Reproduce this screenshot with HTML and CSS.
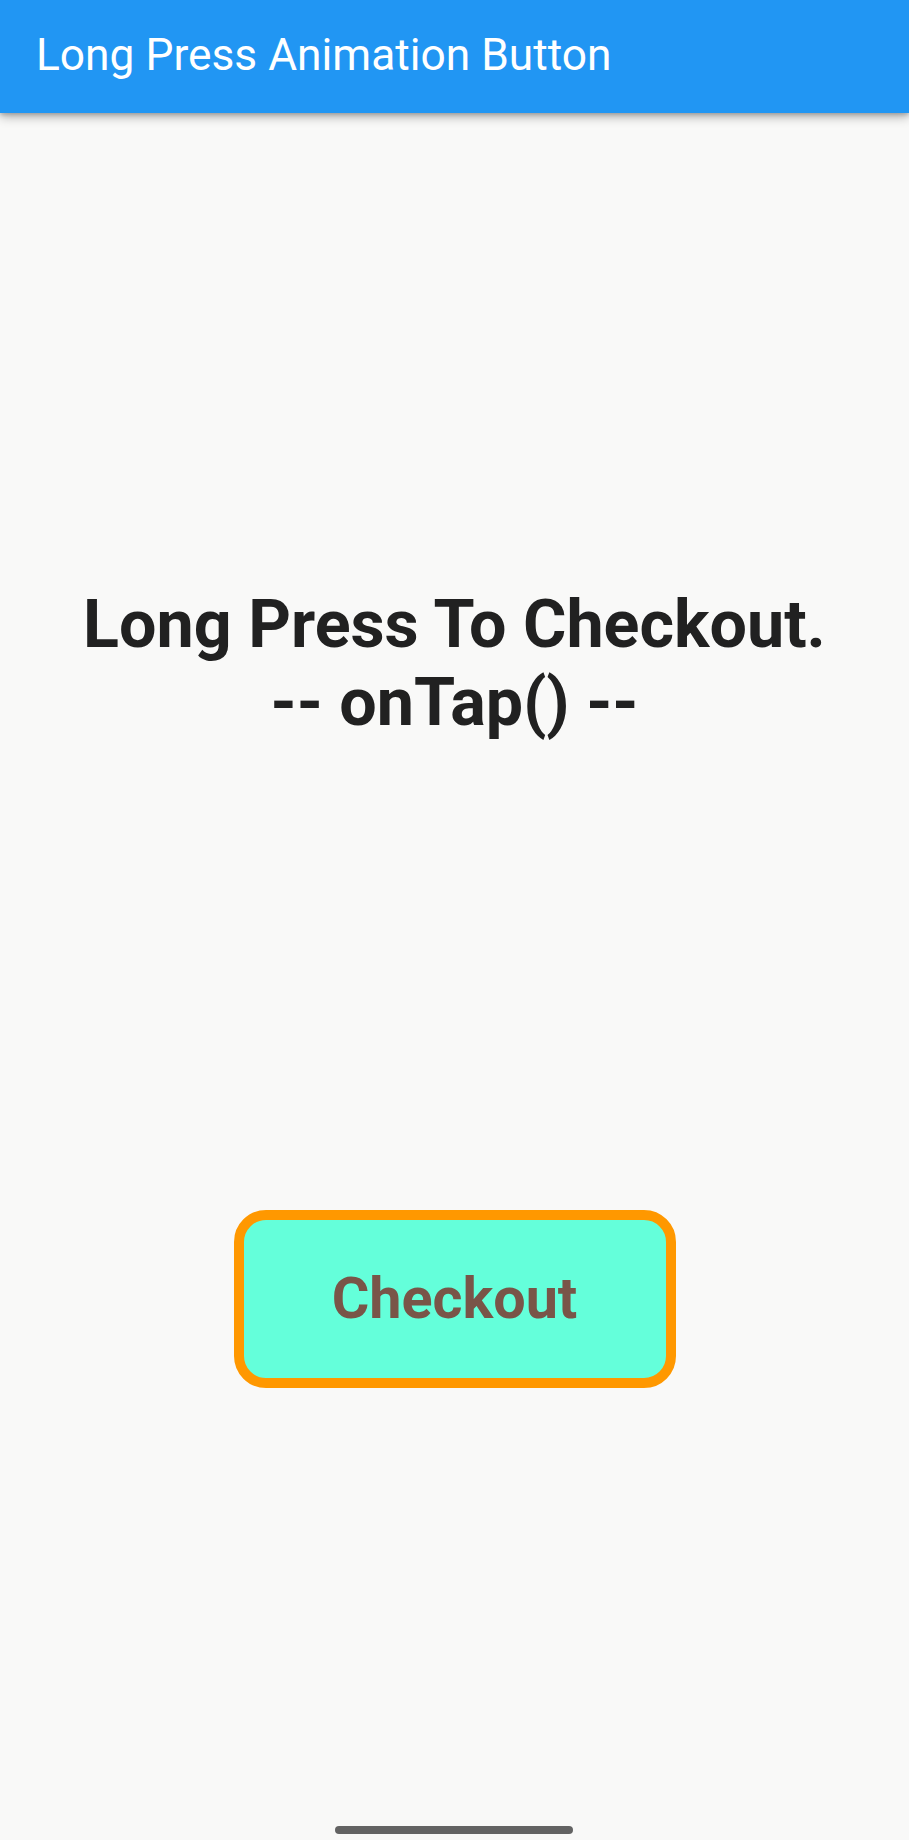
FILE: index.html
```html
<!DOCTYPE html>
<html lang="en">
<head>
<meta charset="utf-8">
<title>Long Press Animation Button</title>
<link rel="stylesheet" href="styles.css">
</head>
<body>
<div class="screen">
  <header class="app-bar">
    <h1 class="app-title">Long Press Animation Button</h1>
  </header>
  <main class="content">
    <p class="status">Long Press To Checkout.<br>-- onTap() --</p>
    <button class="checkout" type="button">Checkout</button>
  </main>
  <div class="home-indicator"></div>
</div>
</body>
</html>
```

FILE: styles.css
```css
html, body {
  margin: 0;
  padding: 0;
}

body {
  width: 909px;
  height: 1840px;
  background: #f9f9f8;
  font-family: Roboto, "Noto Sans", "Liberation Sans", sans-serif;
  overflow: hidden;
}

.screen {
  position: relative;
  height: 1840px;
  display: flex;
  flex-direction: column;
}

.app-bar {
  position: relative;
  z-index: 1;
  height: 113px;
  background: #2196f3;
  display: flex;
  align-items: center;
  padding: 0 36px;
  box-shadow: 0 4px 10px rgba(0, 0, 0, 0.28), 0 2px 4px rgba(0, 0, 0, 0.18);
}

.app-title {
  margin: 0;
  padding-bottom: 2px;
  font-size: 44.3px;
  font-weight: 400;
  color: #ffffff;
  line-height: 1.172;
}

.content {
  flex: 1;
  display: flex;
  flex-direction: column;
  align-items: center;
  padding-top: 472px;
}

.status {
  margin: 0;
  text-align: center;
  font-size: 66.4px;
  font-weight: 700;
  line-height: 78px;
  color: #212121;
}

.checkout {
  margin-top: 469px;
  width: 442px;
  height: 178px;
  box-sizing: border-box;
  border: 10px solid #ff9800;
  border-radius: 32px;
  background: #64ffda;
  color: #795548;
  font-family: Roboto, "Noto Sans", "Liberation Sans", sans-serif;
  font-size: 57.5px;
  font-weight: 700;
  line-height: 68px;
  padding: 0;
  display: flex;
  align-items: center;
  justify-content: center;
}

.home-indicator {
  position: absolute;
  left: 335px;
  bottom: 6px;
  width: 238px;
  height: 8px;
  border-radius: 4px;
  background: #636363;
}
```
